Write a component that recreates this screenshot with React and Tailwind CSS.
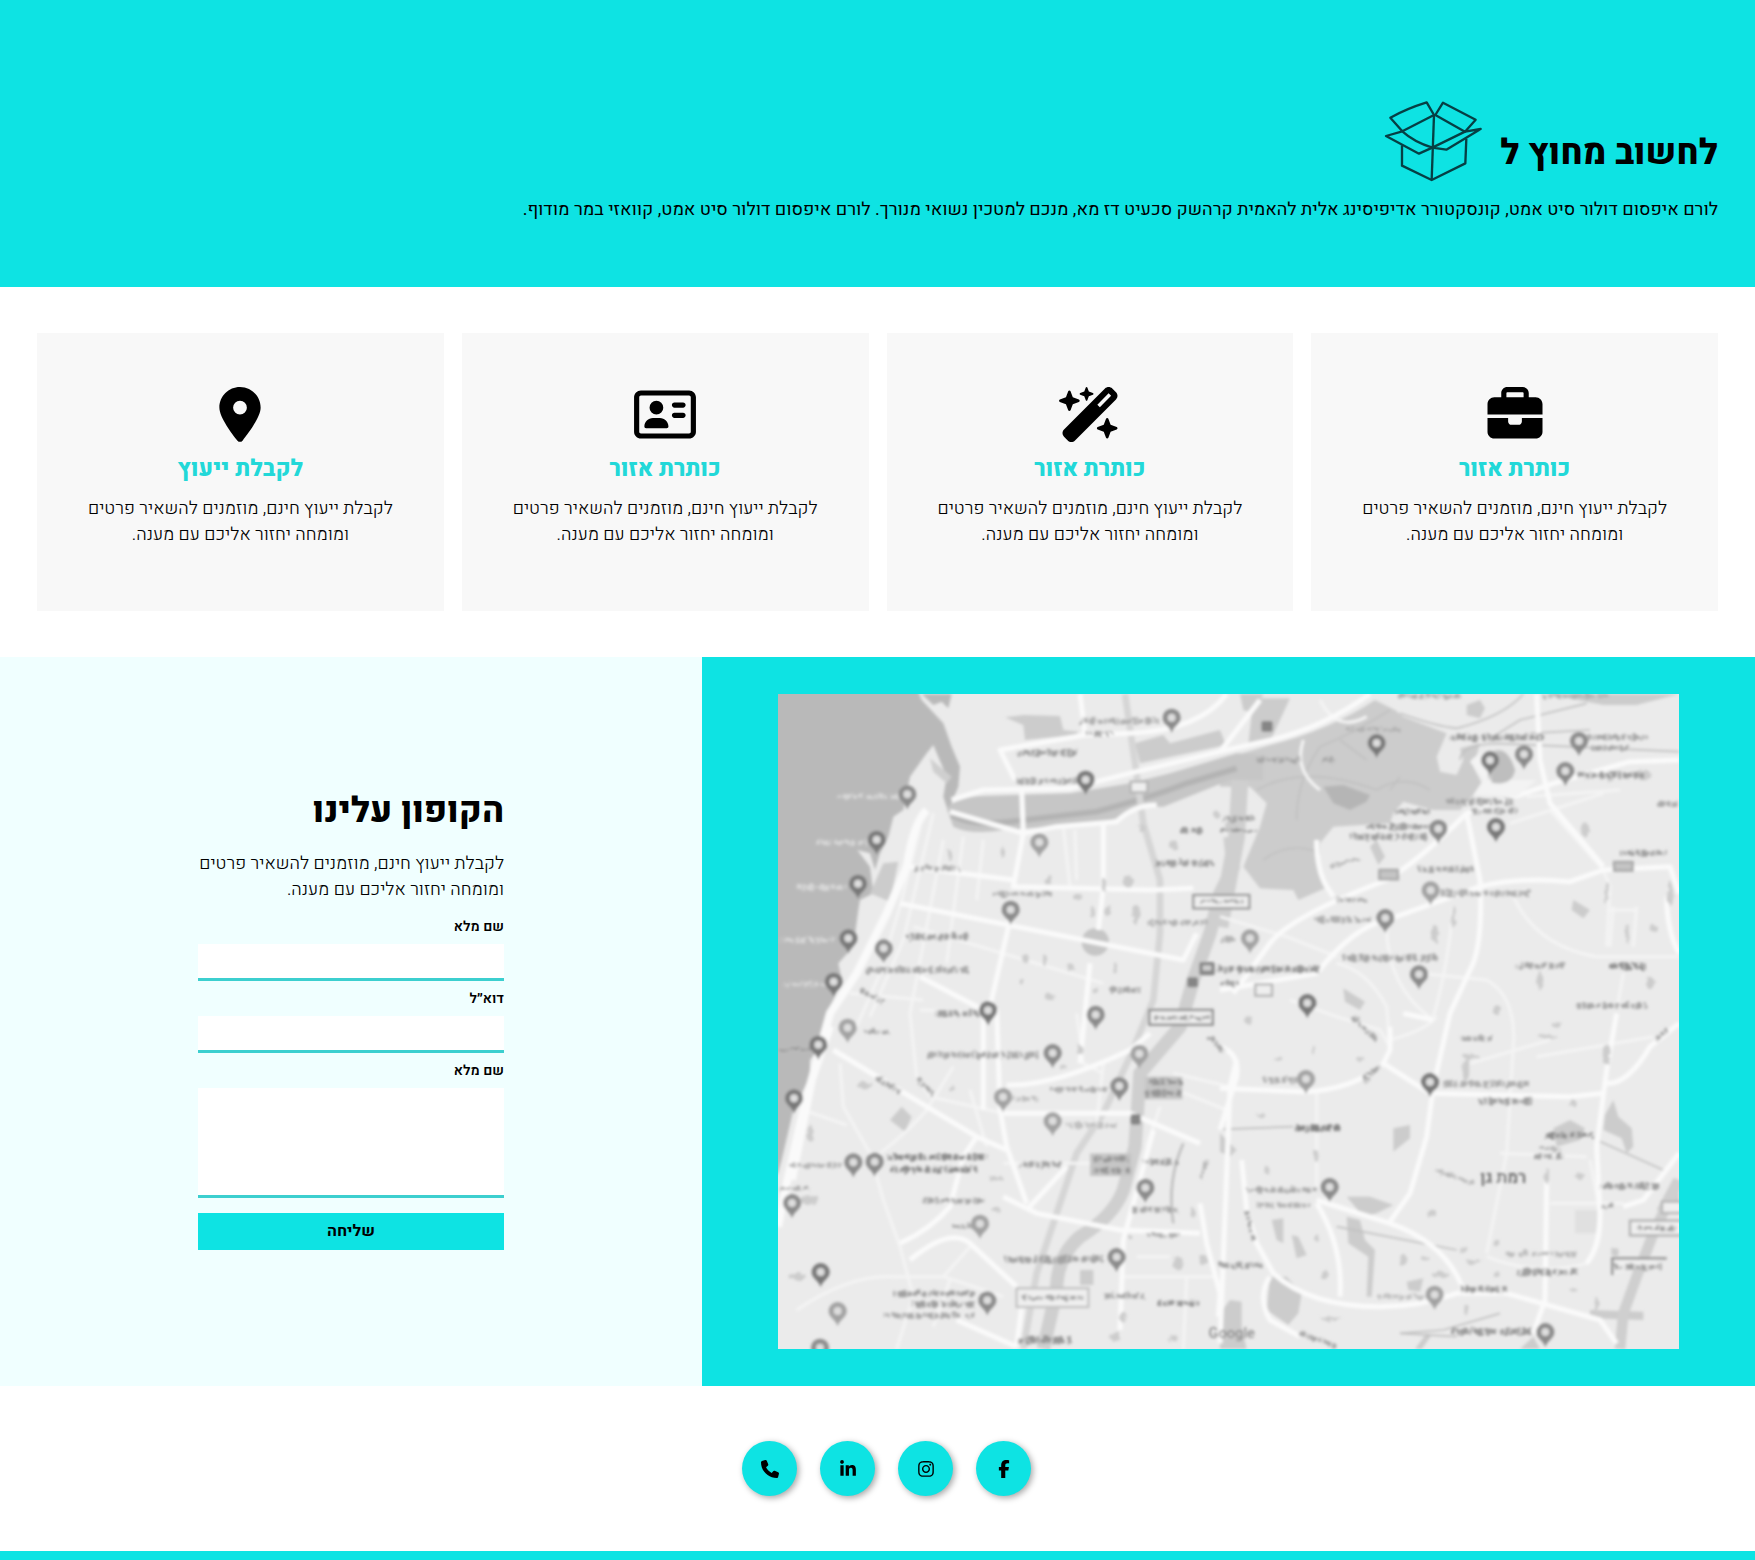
import React from "react";
import {
  FaBriefcase,
  FaWandMagicSparkles,
  FaRegAddressCard,
  FaLocationDot,
  FaFacebookF,
  FaInstagram,
  FaLinkedinIn,
  FaPhone,
} from "react-icons/fa6";

const BLURB = "לקבלת ייעוץ חינם, מוזמנים להשאיר פרטים ומומחה יחזור אליכם עם מענה.";

const cards = [
  { Icon: FaBriefcase, title: "כותרת אזור" },
  { Icon: FaWandMagicSparkles, title: "כותרת אזור" },
  { Icon: FaRegAddressCard, title: "כותרת אזור" },
  { Icon: FaLocationDot, title: "לקבלת ייעוץ" },
];

const socials = [
  { Icon: FaFacebookF, label: "Facebook" },
  { Icon: FaInstagram, label: "Instagram" },
  { Icon: FaLinkedinIn, label: "LinkedIn" },
  { Icon: FaPhone, label: "טלפון" },
];

function BoxIcon() {
  return (
    <svg
      viewBox="130 60 300 249"
      className="h-[83px] w-[100px]"
      fill="none"
      stroke="#063f44"
      strokeWidth="7"
      strokeLinejoin="round"
      aria-hidden="true"
    >
      <path d="M283 105 L261 67 Q200 86 152 113 L188 154 Z" />
      <path d="M287 105 L310 68 L408 119 L376 155 Z" />
      <path d="M188 154 L139 168 L238 221 L278 203 Q222 185 188 154 Z" />
      <path d="M376 155 L423 147 L320 209 L278 203 Z" />
      <path d="M187 196 V257 L276 300 L377 250 L380 176" />
      <path d="M283 105 L276 300" />
    </svg>
  );
}

const DARK = "#787878";
const MID = "#8b8b8b";
const SOFT = "#a2a2a2";

const pins = [
  [412, 342, MID], [320, 478, DARK], [264, 610, DARK], [235, 774, DARK], [341, 804, MID], [191, 904, DARK],
  [947, 298, DARK], [1205, 112, MID], [808, 486, SOFT], [722, 688, MID], [654, 990, DARK], [977, 1003, MID],
  [1820, 188, DARK], [2160, 240, DARK], [2262, 222, MID], [2427, 182, MID], [2386, 272, MID], [2005, 445, MID],
  [2178, 440, DARK], [1982, 630, SOFT], [1846, 713, MID], [1440, 774, SOFT], [1947, 882, MID], [1612, 968, DARK],
  [233, 1042, SOFT], [145, 1093, DARK], [72, 1254, DARK], [848, 1118, MID], [1108, 1120, SOFT], [1048, 1217, MID],
  [699, 1250, SOFT], [848, 1322, SOFT], [250, 1446, MID], [314, 1444, MID], [66, 1568, MID], [1126, 1522, MID],
  [630, 1630, SOFT], [1040, 1730, MID], [152, 1775, DARK], [203, 1892, SOFT], [652, 1860, MID], [150, 2002, MID],
  [1608, 1196, SOFT], [1980, 1205, DARK], [1679, 1520, MID], [1994, 1843, SOFT], [2326, 1955, MID],
];

const parks = [
  "M705 112 L760 105 L870 108 L880 150 L925 155 L920 165 L765 180 L760 135 Z",
  "M1095 190 L1180 165 L1200 190 L1350 150 L1368 195 L1110 250 Z",
  "M340 550 L385 545 L360 665 L300 640 Z",
  "M1450 55 L1560 55 L1500 185 L1435 195 Z",
  "M1410 42 L1480 42 L1450 100 L1420 90 Z",
  "M1350 240 L1500 195 Q1680 150 1815 60 L1875 90 L1900 110 L2030 160 L2000 230 L2010 275 L2060 285 L2080 240 L2070 205 L2130 190 L2110 260 L2135 310 L2110 345 L2070 390 L1990 390 L1900 365 L1870 400 L1860 430 L1690 440 L1650 490 L1650 560 L1675 620 L1585 660 L1570 630 L1470 625 L1420 560 L1470 440 L1490 370 L1440 320 L1350 320 Z",
  "M2090 75 L2130 60 L2145 85 L2130 115 L2090 105 Z",
  "M2330 42 L2727 42 L2600 75 L2500 75 Z",
  "M2165 215 Q2210 190 2235 270 Q2225 320 2165 310 L2150 280 Z",
  "M2410 660 L2460 690 L2440 715 L2405 690 Z",
  "M1720 925 L1785 965 L1770 990 L1725 965 Z",
  "M1820 480 L1845 530 L1825 555 L1800 500 Z",
  "M395 1280 L425 1310 L405 1355 L360 1320 Z",
  "M930 1770 H970 V1815 H930 Z",
  "M1870 1345 L1920 1335 L1920 1375 L1870 1415 Z",
  "M2350 1345 L2400 1320 L2445 1345 L2430 1380 L2360 1400 Z",
  "M2505 1305 L2530 1260 L2545 1310 L2585 1345 L2590 1400 L2570 1420 L2555 1375 L2500 1350 Z",
  "M1730 1550 L1800 1550 L1870 1575 L1820 1600 L1780 1610 Z",
  "M1730 1610 L1770 1620 L1785 1680 L1815 1710 L1805 1850 L1790 1850 L1795 1730 L1735 1690 Z",
  "M1505 1620 L1540 1615 L1540 1690 L1520 1680 Z",
  "M1565 1665 L1585 1670 L1610 1725 L1580 1735 Z",
  "M1500 1790 L1550 1790 L1595 1840 L1585 1900 L1555 1935 L1490 1890 Z",
  "M1350 1900 L1380 1860 L1415 1865 L1415 1940 L1430 2007 L1350 2007 Z",
  "M1350 1360 L1400 1410 L1380 1430 L1350 1415 Z",
  "M1910 1805 L1960 1795 L1950 1835 L1915 1830 Z",
  "M1935 2007 L1970 1960 L1985 1965 L1955 2007 Z",
  "M2250 2007 L2290 1970 L2310 2007 Z",
  "M2660 1590 L2710 1495 L2727 1500 L2727 1600 Z",
  "M2460 1890 L2620 1895 L2620 1920 L2460 1915 Z",
];

const thinRoads = [
  "M450 440 L390 680 L330 880 L260 1040", "M490 400 L400 780 L300 1010", "M580 470 L530 850", "M520 480 L420 1000 L440 1190 L480 1250",
  "M640 480 L620 660", "M880 440 L900 620", "M915 450 L920 600", "M430 740 L1000 910", "M450 990 L680 1000",
  "M210 1150 L220 1280 L300 1420 L340 1560 L390 1700 L430 1850 L380 2007", "M100 1290 L230 1335", "M240 940 L460 960",
  "M330 1420 Q420 1350 470 1290 L550 1160", "M480 1250 L700 1300", "M600 1230 L650 1400", "M80 1890 Q240 1780 380 1790 L520 1790 L700 1850",
  "M520 1790 L600 1700", "M490 1940 L540 1800", "M920 1000 L940 1150 L1000 1180", "M700 1450 H960", "M1000 1150 L980 1330",
  "M1210 1180 L1380 1220", "M1220 1230 L1370 1290", "M1170 1280 L1130 1400", "M1060 1790 H1340", "M1250 1790 L1240 2007", "M1100 1730 H1200",
  "M2270 350 L2550 330", "M2220 430 L2500 340", "M2340 390 L2500 570 L2520 620 L2510 800", "M2230 650 Q2300 800 2480 830 L2727 830",
  "M1850 740 Q1850 920 1990 1020", "M2050 680 Q2030 880 1990 1010", "M1560 960 L1700 1010 L1830 1050 L1860 1100", "M1950 880 L2150 900 Q2240 950 2230 1100 L2210 1420 L2150 1720",
  "M1640 1240 V1540", "M2100 1150 L2340 1080", "M2190 1420 L2450 1430", "M2340 1570 H2560", "M2150 1730 Q2300 1790 2450 1750 Q2500 1700 2490 1600 L2460 1440",
  "M1350 710 L1550 770 L1700 830", "M1700 850 Q1790 870 1850 980 L1860 1100", "M1860 1080 Q1970 1050 2000 1010", "M2560 880 L2540 990", "M2300 1130 L2650 1070",
  "M2530 680 L2520 800 M2600 680 L2590 800 M2510 690 H2600", "M1650 330 Q1570 270 1600 180", "M1650 60 Q1700 160 1790 110",
];

const roads = [
  "M930 42 L945 165", "M735 300 L690 210 L945 165 L1080 160 Q1290 150 1370 42", "M545 360 L640 330 L900 325 L1100 275 L1350 215 L1480 185 Q1650 150 1800 42",
  "M1350 215 L1470 60", "M540 395 L760 460 L860 440 L1040 425 Q1090 375 1160 375", "M755 330 L760 460 L730 620 L1150 630 L1270 625",
  "M420 560 L730 600", "M390 670 L1240 840 L1280 760", "M1000 430 V620 L985 750", "M960 850 L930 1150", "M720 720 L660 980",
  "M450 890 L640 990 V1290", "M680 990 L690 1290 L710 1400 L770 1570", "M190 1110 L470 1280 L620 1370 L710 1410", "M710 1215 Q850 1220 1080 1110 L1140 1060",
  "M700 1300 H1080 L1290 1390", "M620 1370 L580 1430 L540 1580 Q480 1650 390 1690", "M770 1590 L890 1460", "M700 1550 L800 1600 L1050 1650 L1290 1660",
  "M420 1740 Q540 1640 600 1690 L740 1820", "M560 1920 L740 2000", "M760 1840 L740 2000", "M1150 1350 L1060 1680 L1050 1950", "M1290 1570 L1310 1690 L1350 1840 L1345 1910",
  "M1350 1990 L1380 1220 L1400 1140", "M1390 940 L1500 790 Q1560 710 1850 600 Q1950 540 2090 400 L2350 310 L2580 245 L2727 240",
  "M2090 400 L2130 600 Q2140 800 2100 870 L2040 1000 L1990 1220 L1970 1370 L1920 1540 L1860 1625", "M1350 930 L1640 880 Q1750 740 1850 720 L2130 620 Q2250 590 2400 605 L2500 570 L2700 560 L2727 640",
  "M2300 42 L2310 240 L2340 370 L2500 560", "M2690 650 Q2690 750 2727 820", "M1860 1040 L1860 1110 L1840 1150 L1980 1240 L2400 1250 L2500 1240", "M1350 1225 L1600 1235 Q1750 1230 1840 1150",
  "M1350 1100 Q1410 1120 1400 1190 L1350 1350", "M1640 1560 L1860 1630 Q2030 1690 2080 1830", "M1415 1440 L1430 1590 L1460 1690 L1510 1780 Q1620 1880 1830 1880 Q1950 1880 2060 1840 L2210 1840 L2490 1920 L2540 1990",
  "M1640 1570 Q1720 1700 1710 1850", "M2330 1500 L2325 1860 L2290 1960", "M2540 1000 L2510 1170 L2480 1400 L2490 1600 Q2490 1700 2450 1750", "M2500 1210 Q2570 1220 2640 1100 L2727 1030",
  "M1500 1790 Q1460 1850 1500 1920 L1590 1970", "M2727 1420 L2620 1560 L2560 1580", "M1640 480 Q1640 570 1670 620 L1690 650", "M1900 1000 L1990 1020",
];

// Each label: x, y, length, shade, thickness
const labels = [
  [205, 350, 190, "#d6d6d6", 14], [140, 488, 150, "#d6d6d6", 14], [80, 622, 150, "#d6d6d6", 14], [35, 780, 160, "#d6d6d6", 14], [40, 912, 130, "#d2d2d2", 14], [30, 1108, 90, "#9c9c9c", 10],
  [740, 218, 180, "#a2a2a2", 18], [740, 304, 180, "#ababab", 18], [930, 124, 240, "#b2b2b2", 16], [950, 160, 75, "#a8a8a8", 14], [435, 566, 135, "#b4b4b4", 16],
  [670, 642, 180, "#b0b0b0", 14], [405, 770, 190, "#a0a0a0", 18], [290, 870, 305, "#acacac", 18], [495, 1000, 130, "#a0a0a0", 18], [1230, 452, 65, "#9c9c9c", 16],
  [1155, 550, 180, "#a0a0a0", 18], [1130, 728, 180, "#b4b4b4", 16], [1020, 930, 90, "#a8a8a8", 16], [470, 1125, 335, "#acacac", 20], [840, 1228, 170, "#b0b0b0", 14],
  [285, 1056, 75, "#a8a8a8", 14], [730, 1255, 75, "#c0c0c0", 14], [890, 1335, 150, "#c0c0c0", 16], [350, 1431, 300, "#8f8f8f", 18], [360, 1469, 270, "#8f8f8f", 18], [60, 1456, 150, "#b8b8b8", 14],
  [750, 1454, 120, "#a4a4a4", 15], [1120, 1446, 100, "#a0a0a0", 16], [455, 1562, 185, "#a8a8a8", 16], [1090, 1590, 130, "#a8a8a8", 16], [705, 1738, 300, "#a4a4a4", 18],
  [1130, 1666, 100, "#b0b0b0", 14], [370, 1840, 245, "#a0a0a0", 17], [425, 1873, 190, "#a0a0a0", 17], [340, 1906, 270, "#acacac", 14], [1000, 1848, 125, "#a8a8a8", 15], [1165, 1870, 120, "#989898", 16],
  [745, 1980, 165, "#999999", 20], [1135, 1205, 100, "#969696", 15], [1125, 1240, 110, "#969696", 15], [970, 1437, 105, "#969696", 15], [970, 1472, 115, "#969696", 15], [550, 1638, 60, "#b0b0b0", 12], [30, 1526, 85, "#ababab", 12],
  [1460, 240, 140, "#a8a8a8", 13], [1655, 240, 40, "#a8a8a8", 14], [1730, 148, 160, "#b2b2b2", 12], [1360, 415, 90, "#a4a4a4", 16], [1350, 452, 110, "#9a9a9a", 8],
  [2040, 172, 280, "#9c9c9c", 17], [2455, 172, 180, "#a8a8a8", 14], [2465, 205, 110, "#a8a8a8", 14], [2425, 286, 200, "#9c9c9c", 18], [1890, 48, 180, "#b0b0b0", 14], [2320, 48, 200, "#b0b0b0", 14],
  [1870, 395, 110, "#a0a0a0", 15], [2030, 365, 200, "#a8a8a8", 18], [2110, 393, 130, "#a8a8a8", 15], [1790, 440, 190, "#a2a2a2", 16], [1740, 470, 230, "#a2a2a2", 18], [2550, 520, 140, "#a0a0a0", 15],
  [1945, 568, 170, "#a8a8a8", 17], [2015, 640, 265, "#b2b2b2", 19], [1635, 720, 170, "#b0b0b0", 16], [1700, 660, 90, "#b0b0b0", 13], [1715, 834, 290, "#a8a8a8", 20], [2245, 858, 135, "#a8a8a8", 17], [2510, 858, 115, "#909090", 20],
  [1345, 868, 305, "#979797", 19], [1350, 910, 60, "#a8a8a8", 14], [2420, 978, 210, "#a8a8a8", 18], [1350, 780, 50, "#b4b4b4", 13], [2665, 372, 55, "#a8a8a8", 17],
  [2070, 1076, 100, "#acacac", 14], [1480, 1200, 100, "#b0b0b0", 16], [2020, 1212, 260, "#b0b0b0", 18], [2125, 1264, 170, "#a2a2a2", 17], [1575, 1345, 135, "#858585", 18], [2320, 1366, 155, "#8e8e8e", 16],
  [2295, 1430, 85, "#a4a4a4", 14], [1430, 1530, 215, "#acacac", 15], [1460, 1576, 160, "#b4b4b4", 15], [2490, 1518, 175, "#a2a2a2", 18], [2490, 1578, 40, "#a4a4a4", 14], [2240, 1776, 180, "#a0a0a0", 18],
  [2210, 1722, 210, "#bcbcbc", 13], [1350, 1756, 130, "#a8a8a8", 16], [2070, 1828, 140, "#9a9a9a", 18], [1820, 1850, 140, "#c0c0c0", 13], [2045, 1955, 240, "#9c9c9c", 20], [2600, 1645, 120, "#a0a0a0", 11], [2535, 1762, 140, "#a0a0a0", 13],
];

const specks = [
  [540, 522, 18, 40], [700, 515, 16, 30], [835, 602, 22, 22], [1000, 612, 16, 44], [920, 650, 26, 16], [970, 695, 12, 30], [1015, 692, 16, 30], [1098, 705, 22, 60], [765, 835, 16, 24],
  [825, 842, 12, 40], [900, 860, 22, 26], [1035, 864, 12, 34], [755, 905, 14, 18], [840, 950, 26, 20], [975, 930, 20, 16], [1115, 445, 22, 22], [1210, 495, 26, 30], [1385, 440, 40, 36], [1340, 405, 22, 22],
  [1075, 605, 30, 40], [285, 1215, 50, 20], [545, 1228, 16, 14], [930, 1110, 22, 30], [880, 1160, 20, 18], [120, 1360, 16, 54], [110, 1560, 70, 22], [680, 1495, 50, 16], [675, 1590, 30, 14],
  [1270, 1595, 14, 30], [1225, 1750, 32, 36], [1300, 1740, 22, 30], [1080, 1672, 16, 12], [80, 1790, 50, 22], [1060, 1910, 20, 30], [1210, 1975, 26, 24], [1035, 1970, 30, 30], [1490, 1470, 14, 26],
  [2445, 450, 20, 40], [2520, 300, 18, 14], [2620, 285, 44, 34], [2700, 640, 16, 80], [2510, 640, 14, 60], [2050, 710, 12, 70], [1995, 765, 20, 60], [2570, 760, 14, 60], [2650, 745, 22, 20],
  [2240, 860, 12, 10], [2180, 990, 26, 30], [2640, 910, 30, 40], [2310, 900, 20, 50], [1630, 1110, 10, 26], [1525, 1138, 18, 12], [1470, 1305, 28, 14], [1435, 1022, 26, 18], [2088, 1170, 20, 70],
  [2100, 1130, 50, 18], [2330, 1070, 60, 10], [2360, 1035, 30, 16], [1770, 1135, 24, 14], [1790, 1200, 22, 26], [1638, 1430, 16, 40], [2015, 1480, 20, 20], [2430, 1488, 26, 18], [2330, 1490, 14, 50],
  [1985, 1600, 26, 22], [1900, 1740, 24, 30], [1965, 1735, 24, 12], [1665, 1785, 18, 30], [1640, 1675, 16, 14], [2180, 1690, 22, 18], [2080, 1710, 30, 16], [2110, 1745, 50, 12], [2180, 1785, 18, 18],
  [2090, 1890, 14, 30], [1680, 1915, 70, 12], [2010, 1785, 50, 22], [2410, 1830, 20, 10], [2480, 1870, 16, 36], [2535, 1715, 22, 20], [2510, 1120, 24, 60], [2410, 1272, 20, 22],
];

function MapPin({ x, y, shade }) {
  return (
    <g transform={`translate(${x} ${y + 3})`}>
      <path d="M0 44 C-6 22 -27 18 -27 -2 A27 27 0 1 1 27 -2 C27 18 6 22 0 44 Z" fill={shade} />
      <circle cy="-2" r="12" fill="#dedede" />
    </g>
  );
}

function CityMap() {
  return (
    <svg
      viewBox="24 42 2703 1965"
      preserveAspectRatio="xMidYMid slice"
      className="block aspect-[901/655] w-full bg-[#ebebeb]"
      role="img"
      aria-label="מפה"
    >
      <defs>
        <filter id="soft" x="0" y="0" width="1" height="1">
          <feGaussianBlur stdDeviation="4" />
        </filter>
        <filter id="rough" filterUnits="userSpaceOnUse" x="0" y="0" width="2760" height="2040">
          <feTurbulence type="fractalNoise" baseFrequency="0.05" numOctaves="2" seed="4" result="noise" />
          <feDisplacementMap in="SourceGraphic" in2="noise" scale="20" xChannelSelector="R" yChannelSelector="G" />
        </filter>
      </defs>
      <rect x="24" y="42" width="2703" height="1965" fill="#ebebeb" />
      <g filter="url(#soft)">
        <path
          d="M0 0 H430 L455 60 L520 130 L545 200 L570 260 L565 320 L548 360 L536 400 L520 350 L530 290 L490 195 L470 220 L420 290 L400 390 L370 410 L355 470 L330 520 L315 570 L300 520 L262 510 L300 560 L310 640 L270 660 L265 690 L250 800 L205 850 L215 900 L190 960 L165 1010 L165 1080 L120 1140 L120 1190 L70 1290 L35 1440 L24 1480 L0 1500 Z"
          fill="#b9b9b9"
        />
        <path d="M455 42 H545 L535 85 L515 65 L490 75 Z" fill="#b9b9b9" />
        <path d="M480 235 L545 290 L530 310 L490 275 Z" fill="#cfcfcf" />
        <g fill="#cccccc">
          {parks.map((d) => (
            <path key={d} d={d} />
          ))}
        </g>
        <path d="M2415 1590 H2485 V1660 H2415 Z" fill="#e0e0e0" />
        <path
          d="M530 385 Q560 350 640 348 L900 340 L1080 310 L1200 280 L1400 220 L1480 225 L1480 300 L1380 300 L1180 380 L1110 380 Q1040 430 920 435 L700 450 Q600 465 550 440 Z"
          fill="#c6c6c6"
        />
        <path d="M545 405 Q600 440 720 425 L980 395 Q1150 350 1250 310 L1400 265" fill="none" stroke="#b4b4b4" strokeWidth="18" />
        <path d="M1660 320 L1720 315 L1800 345 L1790 365 L1740 390 L1690 370 Z" fill="#b5b5b5" />
        <g fill="none" stroke="#c0c0c0" strokeWidth="5">
          <path d="M1580 420 Q1580 300 1650 200 Q1750 160 1860 90" />
          <path d="M1460 330 Q1600 250 1820 330 Q1900 280 1980 330" />
          <path d="M1710 180 L1790 240 M1860 330 L1890 290 M1480 540 Q1560 480 1650 520" />
          <path d="M1890 100 Q2000 140 2060 145 Q2200 110 2260 42 M2170 170 L2250 120 L2450 70" />
          <path d="M2070 240 Q2070 195 2180 190 L2727 215" />
          <path d="M2280 160 L2460 150" />
          <path d="M1350 1348 L1570 1340 M2480 1380 L2680 1470 M1890 1960 L2060 1970 M1700 1640 L2060 1710" />
          <path d="M1890 1960 L2020 1950 L2190 1900" />
        </g>
        <g fill="none" stroke="#cfcfcf">
          <path d="M1380 470 L1390 560 L1350 640 L1320 760 L1270 900 L1230 1040 L1110 1180 L1095 1400 L1060 1530 Q1030 1610 930 1670 Q860 1730 860 1830 L820 2007" strokeWidth="40" />
          <path d="M1065 42 L1095 250 L1120 430 L1170 600 L1170 760 L1150 960 L1080 1130 L1000 1300 L920 1420 L860 1600 L800 1780 L760 2007" strokeWidth="20" stroke="#d6d6d6" />
          <path d="M1410 300 L1400 470 L1350 740" strokeWidth="50" />
          <path d="M2727 1500 L2650 1660 L2600 1790 L2560 1900 L2550 2007" strokeWidth="32" />
          <path d="M1240 1390 Q1190 1500 1210 1630" strokeWidth="8" stroke="#c0c0c0" />
        </g>
        <circle cx="976" cy="786" r="41" fill="#c6c6c6" />
        <g fill="none" stroke="#f4f4f4" strokeWidth="9" strokeLinejoin="round">
          {thinRoads.map((d) => (
            <path key={d} d={d} />
          ))}
        </g>
        <g fill="none" stroke="#fafafa" strokeWidth="15" strokeLinejoin="round">
          {roads.map((d) => (
            <path key={d} d={d} />
          ))}
          <path d="M470 390 Q430 430 410 560 L350 700 L260 880 L180 1000 L100 1290 L50 1510 L24 1640" strokeWidth="24" />
          <path d="M185 1040 L130 1200 L70 1500" />
        </g>
        <path d="M2100 245 Q2130 210 2165 220 L2150 300 L2300 300 L2240 350 L2110 345 L2140 300 Z" fill="#f3f3f3" />
        <path d="M2165 225 Q2210 190 2235 270 Q2225 320 2165 308 Z" fill="#bebebe" />
        <g fill="#cccccc" filter="url(#rough)">
          {specks.map(([x, y, w, h]) => (
            <ellipse key={`${x}-${y}`} cx={x} cy={y} rx={w / 2} ry={h / 2} />
          ))}
        </g>
        <g fill="#c6c6c6">
          <rect x="1125" y="1190" width="112" height="68" />
          <rect x="960" y="1420" width="125" height="68" />
        </g>
        <g fill="#efefef" strokeWidth="7">
          <rect x="1270" y="645" width="168" height="40" stroke="#9a9a9a" />
          <rect x="1138" y="990" width="190" height="44" stroke="#8c8c8c" />
          <rect x="740" y="1825" width="215" height="56" stroke="#c2c2c2" />
          <rect x="2580" y="1622" width="160" height="44" stroke="#b0b0b0" />
          <path d="M2527 1785 V1735 H2690" stroke="#8c8c8c" />
          <rect x="1082" y="305" width="50" height="32" stroke="#b5b5b5" />
          <rect x="1456" y="913" width="50" height="34" stroke="#b5b5b5" />
          <rect x="1828" y="570" width="56" height="28" fill="#c4c4c4" stroke="#a8a8a8" />
          <rect x="2532" y="546" width="56" height="26" fill="#c4c4c4" stroke="#a8a8a8" />
          <rect x="2676" y="1565" width="60" height="34" stroke="#b5b5b5" />
        </g>
        <g fill="#858585">
          <rect x="1474" y="123" width="34" height="32" rx="6" />
          <rect x="1288" y="846" width="46" height="40" rx="6" />
          <rect x="1252" y="892" width="32" height="30" rx="6" />
          <rect x="1082" y="1302" width="30" height="32" rx="6" />
        </g>
        <rect x="1298" y="856" width="26" height="16" fill="#cfcfcf" />
        <g fill="none" strokeDasharray="15 5 9 3 22 4 7 6 28 5 12 3 18 8" filter="url(#rough)">
          <path d="M1290 665 H1420 M1155 1014 H1315 M755 1853 H940" stroke="#a8a8a8" strokeWidth="12" />
          {labels.map(([x, y, w, shade, t]) => (
            <path key={`${x}-${y}`} d={`M${x} ${y} h${w}`} stroke={shade} strokeWidth={t} strokeDashoffset={(x * 7 + y * 3) % 97} />
          ))}
          <path d="M320 1195 L390 1235 M445 1195 L490 1245 M1320 1070 L1360 1115 M1750 1015 L1820 1080 M1590 1960 L1700 2000 M1430 1590 L1450 1680 M1780 1195 L1830 1160 M2660 1080 L2690 1050 M270 930 L340 965" stroke="#a8a8a8" strokeWidth="14" />
          <path d="M1680 560 L1770 535 M1290 1500 L1310 1440 M2310 1400 L2370 1410 M2000 1470 L2110 1510" stroke="#b8b8b8" strokeWidth="10" />
        </g>
        {pins.map(([x, y, shade]) => (
          <MapPin key={`${x}-${y}`} x={x} y={y} shade={shade} />
        ))}
        <text x="2200" y="1508" textAnchor="middle" fontSize="50" fill="#666666" className="font-semibold">
          רמת גן
        </text>
        <text x="1385" y="1975" textAnchor="middle" fontSize="44" fill="#858585" className="font-medium">
          Google
        </text>
      </g>
    </svg>
  );
}

const fieldClass = "mt-1 block w-full resize-none border-b-[3px] border-[#3ccfcf] bg-white px-2 outline-none";
const labelClass = "block text-[14px] leading-[26px] font-semibold";

export default function App() {
  return (
    <div dir="rtl" className="bg-white font-['Heebo','Open_Sans',sans-serif] text-[18px] leading-[26px] font-light text-black">
      <header className="bg-[#0ee3e3] px-[37px] pt-[100px] pb-[64px]">
        <div className="flex items-center gap-[17px]">
          <h1 className="pt-[22px] text-[35px] leading-[48px] font-extrabold">לחשוב מחוץ ל</h1>
          <BoxIcon />
        </div>
        <p className="mt-[14px] font-normal">
          לורם איפסום דולור סיט אמט, קונסקטורר אדיפיסינג אלית להאמית קרהשק סכעיט דז מא, מנכם למטכין נשואי מנורך. לורם איפסום דולור סיט אמט, קוואזי במר מודוף.
        </p>
      </header>

      <main>
        <section className="grid grid-cols-4 gap-[18px] px-[37px] py-[46px]">
          {cards.map(({ Icon, title }, i) => (
            <article key={i} className="flex flex-col items-center bg-[#f8f8f8] px-[46px] pt-[54px] pb-[63px] text-center">
              <Icon className="h-[55px] w-[62px]" aria-hidden="true" />
              <h3 className="my-[11px] text-[23px] leading-[32px] font-extrabold text-[#22d8d8]">{title}</h3>
              <p>{BLURB}</p>
            </article>
          ))}
        </section>

        <section className="grid grid-cols-[3fr_2fr]">
          <div className="bg-[#0ee3e3] px-[76px] py-[37px]">
            <CityMap />
          </div>
          <div className="flex items-center justify-center bg-[#f0ffff]">
            <form className="w-[306px]" onSubmit={(e) => e.preventDefault()}>
              <h2 className="mb-[25px] pt-[2px] text-[35px] leading-[30px] font-extrabold">הקופון עלינו</h2>
              <p className="mb-[11px]">{BLURB}</p>
              <label htmlFor="name" className={labelClass}>שם מלא</label>
              <input id="name" type="text" className={`${fieldClass} mb-[5px] h-[37px]`} />
              <label htmlFor="email" className={labelClass}>דוא״ל</label>
              <input id="email" type="email" className={`${fieldClass} mb-[5px] h-[37px]`} />
              <label htmlFor="message" className={labelClass}>שם מלא</label>
              <textarea id="message" className={`${fieldClass} h-[110px]`} />
              <button type="submit" className="mt-[15px] block h-[37px] w-full bg-[#0ee3e3] text-[16px] font-bold">
                שליחה
              </button>
            </form>
          </div>
        </section>

        <nav className="flex justify-center gap-[23px] py-[55px] pl-[18px]">
          {socials.map(({ Icon, label }) => (
            <a
              key={label}
              href="#"
              aria-label={label}
              className="flex size-[55px] items-center justify-center rounded-full bg-[#0ee3e3] text-[18px] shadow-[2px_2px_6px_rgba(0,0,0,0.35)]"
            >
              <Icon aria-hidden="true" />
            </a>
          ))}
        </nav>
      </main>
      <footer className="h-[9px] bg-[#0ee3e3]" />
    </div>
  );
}
